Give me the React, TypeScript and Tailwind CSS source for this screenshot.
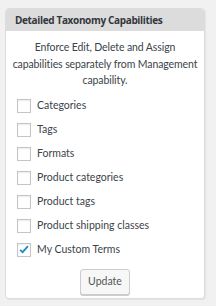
import { useState } from "react";

const terms = [
  "Categories",
  "Tags",
  "Formats",
  "Product categories",
  "Product tags",
  "Product shipping classes",
  "My Custom Terms",
];

export default function App() {
  const [checked, setChecked] = useState<Record<string, boolean>>({ "My Custom Terms": true });

  return (
    <div
      className="min-h-[306px] w-[216px] bg-[#f1f1f1] pl-[5px] pt-[8px] text-[#444]"
      style={{ fontFamily: 'Lato, "Open Sans", sans-serif' }}
    >
      <div className="w-[200px] overflow-hidden rounded-[4px] border border-[#dddddd] bg-white shadow-[1px_1px_1px_rgba(0,0,0,0.06)]">
        <div className="flex h-[22px] items-center bg-[#dcdcdc] px-[9px] font-['Open_Sans',sans-serif] text-[10px] font-bold tracking-[-0.35px] text-[#32373c]">
          Detailed Taxonomy Capabilities
        </div>
        <div className="px-[4px] pb-[3px] pt-[8px]">
          <p className="text-center text-[10.5px] leading-[16.5px] tracking-[-0.1px] text-[#3c434a]">
            Enforce Edit, Delete and Assign
            <br />
            capabilities separately from Management
            <br />
            capability.
          </p>
          <div className="mt-[5px] flex flex-col pl-[6px]">
            {terms.map((t) => (
              <label key={t} className="flex h-[24px] cursor-pointer items-center gap-[6px] pl-[1px]">
                <span
                  onClick={() => setChecked({ ...checked, [t]: !checked[t] })}
                  className="flex h-[14px] w-[14px] items-center justify-center border border-[#c3c4c7] bg-white shadow-[inset_0_1px_2px_rgba(0,0,0,0.07)]"
                >
                  {checked[t] && (
                    <svg viewBox="0 0 20 20" className="h-[13px] w-[13px]">
                      <path d="M3.5 10.5 L7.8 14.5 L16.5 4.5" fill="none" stroke="#1e8cbe" strokeWidth="3" />
                    </svg>
                  )}
                </span>
                <span className="text-[10.5px] text-[#3c434a]">{t}</span>
              </label>
            ))}
          </div>
          <div className="mt-[7px] flex justify-center">
            <button className="h-[26px] w-[50px] rounded-[3px] border border-[#cccccc] bg-[#f7f7f7] text-[10.5px] text-[#555] shadow-[0_1px_0_#ccc]">
              Update
            </button>
          </div>
        </div>
      </div>
    </div>
  );
}
